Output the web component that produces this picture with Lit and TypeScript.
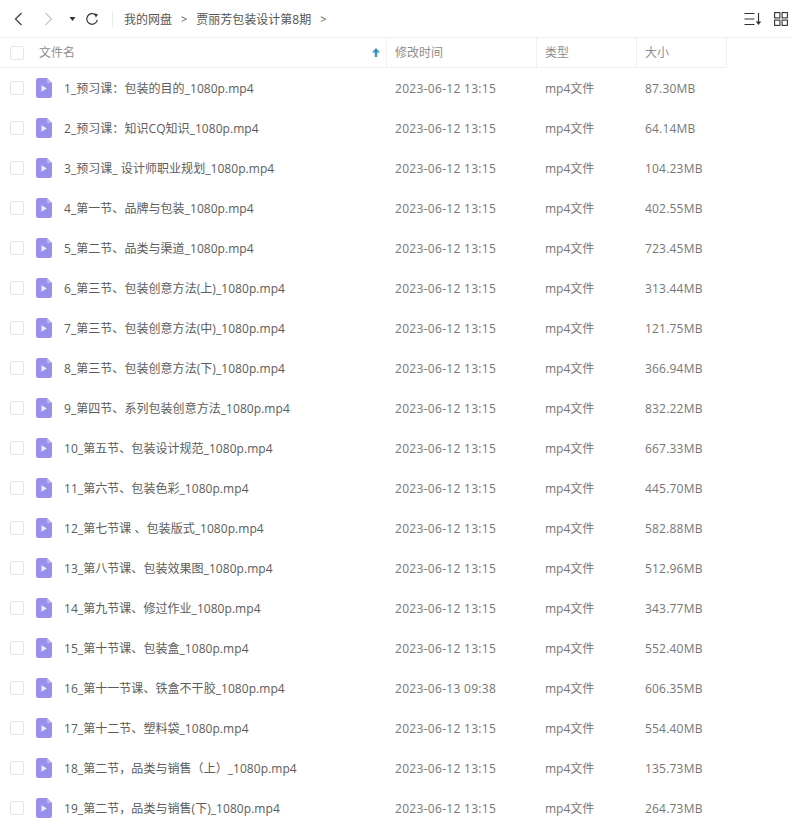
import { LitElement, html, css, svg } from "lit";
import { customElement } from "lit/decorators.js";

const T = "2023-06-12 13:15";
const rows: [string, string, string][] = [
  ["1_预习课：包装的目的_1080p.mp4", T, "87.30MB"],
  ["2_预习课：知识CQ知识_1080p.mp4", T, "64.14MB"],
  ["3_预习课_ 设计师职业规划_1080p.mp4", T, "104.23MB"],
  ["4_第一节、品牌与包装_1080p.mp4", T, "402.55MB"],
  ["5_第二节、品类与渠道_1080p.mp4", T, "723.45MB"],
  ["6_第三节、包装创意方法(上)_1080p.mp4", T, "313.44MB"],
  ["7_第三节、包装创意方法(中)_1080p.mp4", T, "121.75MB"],
  ["8_第三节、包装创意方法(下)_1080p.mp4", T, "366.94MB"],
  ["9_第四节、系列包装创意方法_1080p.mp4", T, "832.22MB"],
  ["10_第五节、包装设计规范_1080p.mp4", T, "667.33MB"],
  ["11_第六节、包装色彩_1080p.mp4", T, "445.70MB"],
  ["12_第七节课 、包装版式_1080p.mp4", T, "582.88MB"],
  ["13_第八节课、包装效果图_1080p.mp4", T, "512.96MB"],
  ["14_第九节课、修过作业_1080p.mp4", T, "343.77MB"],
  ["15_第十节课、包装盒_1080p.mp4", T, "552.40MB"],
  ["16_第十一节课、铁盒不干胶_1080p.mp4", "2023-06-13 09:38", "606.35MB"],
  ["17_第十二节、塑料袋_1080p.mp4", T, "554.40MB"],
  ["18_第二节，品类与销售（上）_1080p.mp4", T, "135.73MB"],
  ["19_第二节，品类与销售(下)_1080p.mp4", T, "264.73MB"],
];

const fileIcon = svg`<svg class="ficon" width="16" height="20" viewBox="0 0 16 20">
  <path d="M2.5 0H11L16 5V17.5A2.5 2.5 0 0 1 13.500 20H2.500A2.500 2.500 0 0 1 0 17.500V2.500A2.500 2.500 0 0 1 2.500 0Z" fill="#9891ec"/>
  <path d="M11 0L16 5H12.500A1.500 1.500 0 0 1 11 3.500Z" fill="#bcb8f5"/>
  <path d="M5.500 7.300L10.800 10.500L5.500 13.700Z" fill="#eceaff"/>
</svg>`;

@customElement("app-root")
export class AppRoot extends LitElement {
  static styles = css`
    :host {
      display: block;
      width: 792px;
      height: 832px;
      overflow: hidden;
      background: #fff;
      font-family: "Open Sans", "Noto Sans CJK SC", sans-serif;
      font-size: 12px;
      color: #666;
    }
    .toolbar {
      height: 37px;
      display: flex;
      align-items: center;
      border-bottom: 1px solid #f0f0f0;
    }
    .nav {
      display: flex;
      align-items: center;
      width: 112px;
      flex: none;
      height: 100%;
    }
    .nav svg { flex: none; display: block; }
    .back { margin-left: 13px; }
    .forward { margin-left: 19px; }
    .drop { margin-left: 15px; }
    .refresh { margin-left: 9px; }
    .divider {
      width: 1px;
      height: 16px;
      background: #ececec;
      flex: none;
    }
    .crumbs {
      display: flex;
      align-items: center;
      margin-left: 11px;
      color: #555;
      font-size: 12px;
      white-space: nowrap;
    }
    .sep { margin: 0 9px; font-size: 11px; }
    .tools {
      margin-left: auto;
      margin-right: 4px;
      display: flex;
      align-items: center;
      gap: 12px;
    }
    .tools svg { display: block; }
    .head {
      display: grid;
      grid-template-columns: 386px 150px 100px 90px 1fr;
      height: 30px;
      color: #8e8e8e;
      font-size: 12px;
      line-height: 28px;
    }
    .hc {
      display: flex;
      align-items: center;
      padding-left: 8px;
      border-left: 1px solid #f0f0f0;
      border-bottom: 1px solid #f0f0f0;
    }
    .hc.first {
      border-left: none;
      padding-left: 10px;
    }
    .hc.last {
      border-bottom: none;
    }
    .hname { margin-left: 15px; }
    .arrow { margin-left: auto; margin-right: 6px; display: block; }
    .check {
      width: 12px;
      height: 12px;
      border: 1px solid #e6e6e6;
      border-radius: 2px;
      background: #fff;
      flex: none;
    }
    .row {
      display: grid;
      grid-template-columns: 387px 150px 100px 1fr;
      height: 40px;
      align-items: center;
      white-space: nowrap;
    }
    .namecell {
      display: flex;
      align-items: center;
      padding-left: 10px;
      color: #5c5c5c;
      letter-spacing: 0.05px;
    }
    .ficon { margin-left: 12px; margin-right: 12px; flex: none; display: block; }
    .cell { padding-left: 8px; color: #767676; }
    .date { letter-spacing: 0.3px; }
    .size { letter-spacing: 0.2px; }
  `;

  render() {
    return html`
      <div class="toolbar">
        <div class="nav">
          <svg class="back" width="11" height="16" viewBox="0 0 11 16"><path d="M8.500 2L2.500 8L8.500 14" fill="none" stroke="#444" stroke-width="1.300"/></svg>
          <svg class="forward" width="11" height="16" viewBox="0 0 11 16"><path d="M2.500 2L8.500 8L2.500 14" fill="none" stroke="#c8c8c8" stroke-width="1.300"/></svg>
          <svg class="drop" width="7" height="6" viewBox="0 0 7 6"><path d="M0.500 1H6.500L3.500 5Z" fill="#333"/></svg>
          <svg class="refresh" width="14" height="14" viewBox="0 0 14 14"><path d="M12.300 7.800A5.300 5.300 0 1 1 10.800 3.200" fill="none" stroke="#333" stroke-width="1.200"/><path d="M9.200 1.200L13 2.600L10.800 5.600Z" fill="#333"/></svg>
        </div>
        <div class="divider"></div>
        <div class="crumbs">
          <span>我的网盘</span><span class="sep">&gt;</span><span>贾丽芳包装设计第8期</span><span class="sep">&gt;</span>
        </div>
        <div class="tools">
          <svg width="18" height="14" viewBox="0 0 18 14"><path d="M0.500 1.500H10.500M0.500 7H10.500M0.500 12.500H10.500" stroke="#333" stroke-width="1.100" fill="none"/><path d="M14.500 1V12" stroke="#333" stroke-width="1.200"/><path d="M11.800 9.500L14.500 13L17.200 9.500Z" fill="#333"/></svg>
          <svg width="14" height="14" viewBox="0 0 14 14"><g fill="none" stroke="#333" stroke-width="1.100"><rect x="0.600" y="0.600" width="5.300" height="5.300"/><rect x="8.100" y="0.600" width="5.300" height="5.300"/><rect x="0.600" y="8.100" width="5.300" height="5.300"/><rect x="8.100" y="8.100" width="5.300" height="5.300"/></g></svg>
        </div>
      </div>
      <div class="head">
        <div class="hc first">
          <span class="check"></span><span class="hname">文件名</span>
          <svg class="arrow" width="8" height="9" viewBox="0 0 8 9"><path d="M4 0L8 4.500H5.200V9H2.800V4.500H0Z" fill="#3a93c4"/></svg>
        </div>
        <div class="hc">修改时间</div>
        <div class="hc">类型</div>
        <div class="hc">大小</div>
        <div class="hc last"></div>
      </div>
      ${rows.map(
        ([n, t, s]) => html`<div class="row">
          <div class="namecell"><span class="check"></span>${fileIcon}<span>${n}</span></div>
          <div class="cell date">${t}</div>
          <div class="cell">mp4文件</div>
          <div class="cell size">${s}</div>
        </div>`
      )}
    `;
  }
}
